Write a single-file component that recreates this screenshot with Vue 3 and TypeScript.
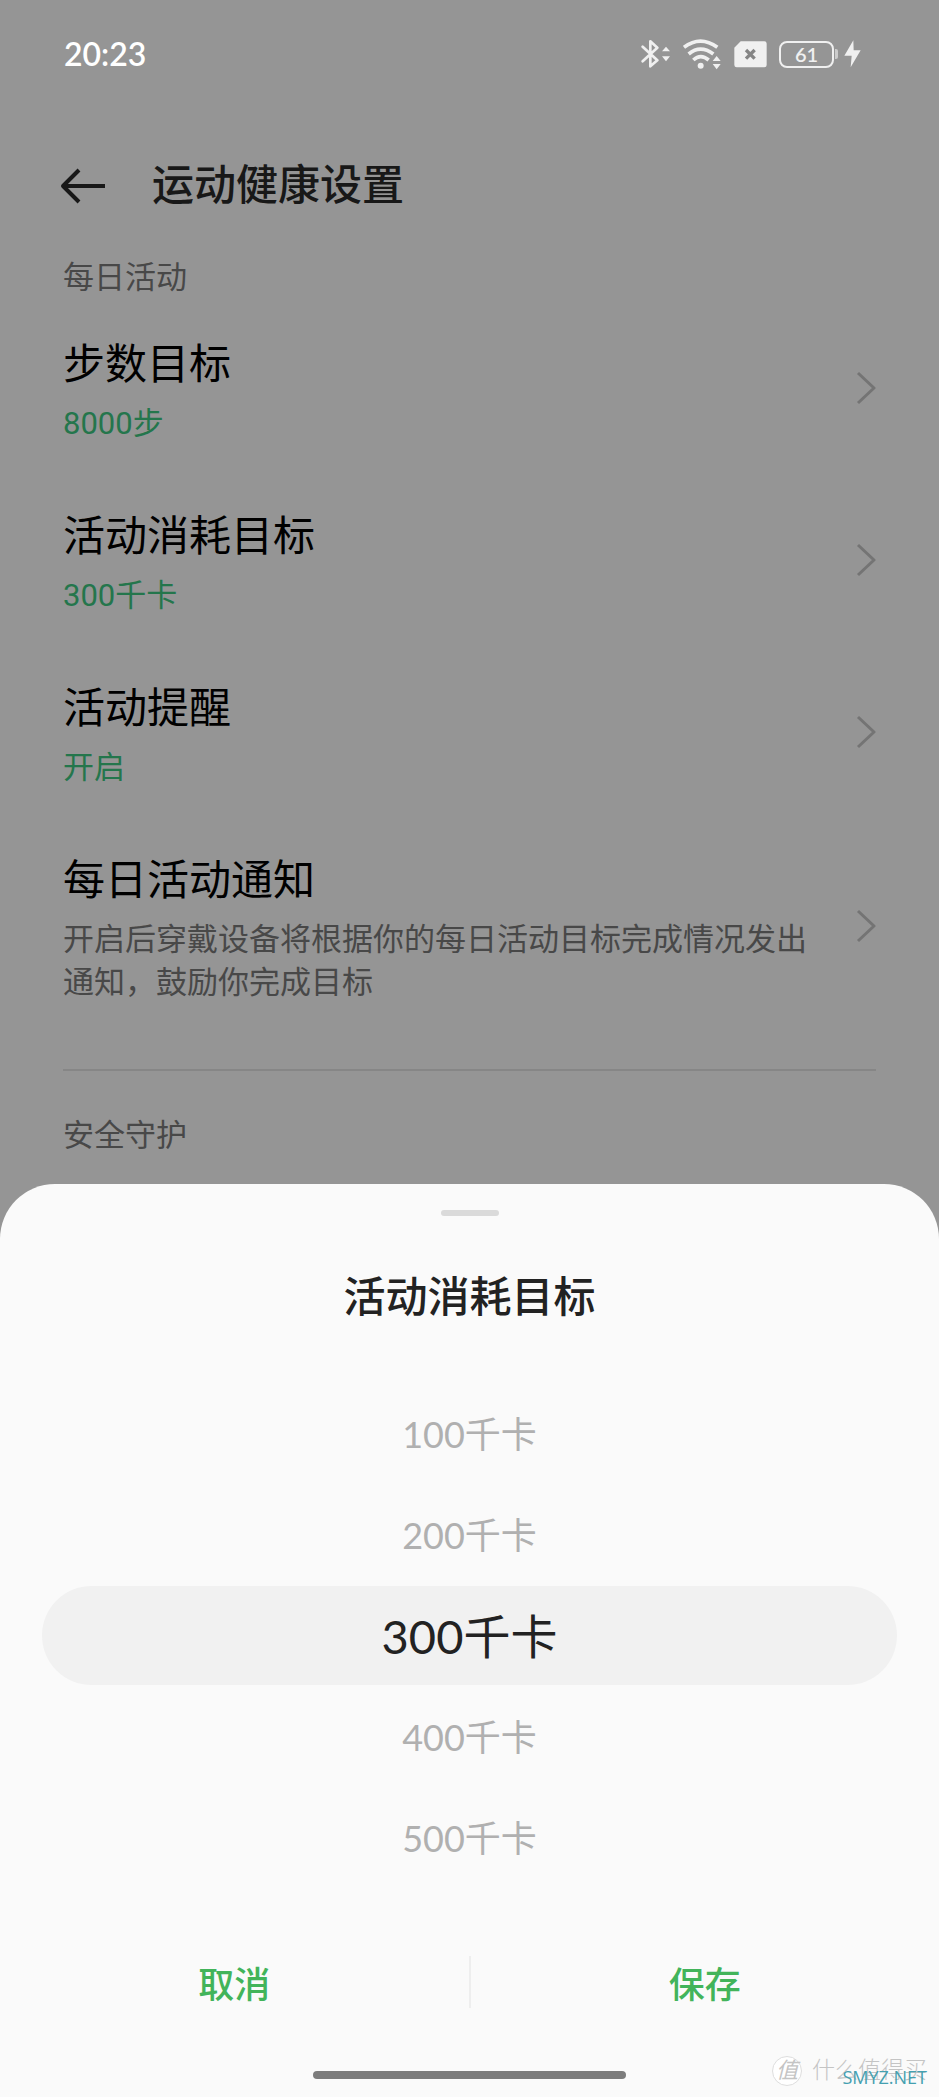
<script setup lang="ts">
import { ref } from 'vue'

interface SettingItem {
  title: string
  detail: string
  muted?: boolean
}

const items: SettingItem[] = [
  { title: '步数目标', detail: '8000步' },
  { title: '活动消耗目标', detail: '300千卡' },
  { title: '活动提醒', detail: '开启' },
  { title: '每日活动通知', detail: '开启后穿戴设备将根据你的每日活动目标完成情况发出通知，鼓励你完成目标', muted: true },
]

const goals: number[] = [100, 200, 300, 400, 500]
const selected = ref<number>(300)
</script>

<template>
  <div class="screen">
    <div class="status">
      <span class="time">20:23</span>
      <div class="status-icons">
        <svg width="30" height="30" viewBox="0 0 90 90" aria-hidden="true">
          <path d="M5 23 49 64 28 82V7L49 26 5 67" fill="none" stroke="currentColor" stroke-width="8" stroke-linejoin="round" stroke-linecap="round" />
          <path d="M75 23 87 37H63ZM75 67 63 52H87Z" fill="currentColor" />
        </svg>
        <svg width="39" height="31" viewBox="0 0 117 93" aria-hidden="true">
          <g fill="none" stroke="currentColor" stroke-width="11">
            <path d="M3 25Q52-12 103 25" />
            <path d="M17 45Q52 16 91 45" />
            <path d="M31 63Q53 43 77 63" />
          </g>
          <circle cx="53" cy="80" r="9" fill="currentColor" />
          <path d="M101 51 113 66H89ZM101 91 89 75H113Z" fill="currentColor" />
        </svg>
        <svg width="33" height="27" viewBox="0 0 99 81" aria-hidden="true">
          <path d="M20 1H91Q98 1 98 8V72Q98 79 91 79H8Q1 79 1 72V20Z" fill="currentColor" />
          <path d="M36 27 62 53M62 27 36 53" stroke="#858585" stroke-width="10" />
        </svg>
        <div class="battery">
          <span class="battery-body">61</span>
          <span class="battery-tip"></span>
          <svg width="17" height="28" viewBox="0 0 51 84" aria-hidden="true">
            <path d="M28 1 1 47H23L20 82 50 31H29Z" fill="currentColor" />
          </svg>
        </div>
      </div>
    </div>

    <header class="header">
      <button class="back" type="button" aria-label="返回">
        <svg width="46" height="36" viewBox="0 0 46 36" aria-hidden="true">
          <path d="M19 2 3 18 19 34M3 18H45" fill="none" stroke="currentColor" stroke-width="4" stroke-linejoin="round" />
        </svg>
      </button>
      <h1>运动健康设置</h1>
    </header>

    <main class="settings">
      <h2 class="section">每日活动</h2>
      <button v-for="item in items" :key="item.title" class="item" type="button">
        <span class="item-text">
          <span class="item-title">{{ item.title }}</span>
          <span class="item-detail" :class="{ muted: item.muted }">{{ item.detail }}</span>
        </span>
        <svg class="chevron" width="20" height="34" viewBox="0 0 20 34" aria-hidden="true">
          <path d="M2 2 18 17 2 32" fill="none" stroke="currentColor" stroke-width="3" stroke-linejoin="round" />
        </svg>
      </button>
      <hr />
      <h2 class="section">安全守护</h2>
    </main>

    <section class="sheet" role="dialog" aria-labelledby="sheet-title">
      <span class="handle"></span>
      <h2 id="sheet-title" class="sheet-title">活动消耗目标</h2>
      <div class="picker" role="radiogroup" aria-labelledby="sheet-title">
        <label v-for="goal in goals" :key="goal" class="option" :class="{ active: goal === selected }">
          <input v-model="selected" type="radio" name="goal" :value="goal" />
          <span>{{ goal }}千卡</span>
        </label>
      </div>
      <div class="actions">
        <button type="button">取消</button>
        <span class="divider"></span>
        <button type="button">保存</button>
      </div>
      <span class="home"></span>
    </section>

    <div class="watermark">
      <span class="seal">值</span>
      <span class="brand">什么值得买</span>
      <span class="site">SMYZ.NET</span>
    </div>
  </div>
</template>

<style>
body {
  margin: 0;
  background: #959595;
}
</style>

<style scoped>
.screen {
  position: relative;
  min-height: 100vh;
  overflow: hidden;
  background: #959595;
  font-family: Roboto, "Noto Sans CJK SC", sans-serif;
  color: #000;
}
h1,
h2 {
  margin: 0;
}
button {
  padding: 0;
  border: 0;
  background: none;
  font: inherit;
  color: inherit;
  cursor: pointer;
}
svg {
  display: block;
  flex: none;
}
.status {
  display: flex;
  align-items: center;
  justify-content: space-between;
  height: 108px;
  padding: 0 78px 0 64px;
  color: #f0f0f0;
}
.time {
  font: 600 32px/40px Lato, sans-serif;
  color: #fff;
}
.status-icons {
  display: flex;
  align-items: center;
  gap: 12px;
}
.battery {
  display: flex;
  align-items: center;
}
.battery-body {
  box-sizing: border-box;
  width: 55px;
  height: 27px;
  border: 2px solid #f0f0f0;
  border-radius: 8px;
  font: 600 20px/22px Lato, sans-serif;
  text-align: center;
}
.battery-tip {
  width: 3px;
  height: 10px;
  margin: 0 6px 0 1px;
  border-radius: 0 2px 2px 0;
  background: #ccc;
}
.header {
  box-sizing: border-box;
  display: flex;
  align-items: center;
  gap: 46px;
  height: 148px;
  padding: 8px 60px 0;
  color: #181818;
}
h1,
.sheet-title {
  font-size: 42px;
  line-height: 56px;
  font-weight: 500;
}
.settings {
  padding: 0 63px;
}
.section {
  font-size: 31px;
  line-height: 43px;
  font-weight: 400;
  color: #484848;
}
.item {
  display: flex;
  align-items: center;
  justify-content: space-between;
  gap: 45px;
  width: 100%;
  padding: 29px 0;
  text-align: left;
}
.section + .item {
  margin-top: 3px;
}
.item-text {
  display: flex;
  flex-direction: column;
  gap: 9px;
  padding-top: 6px;
}
.item-title {
  font-size: 42px;
  line-height: 56px;
}
.item-detail {
  font-size: 31px;
  line-height: 43px;
  color: #24764c;
}
.item-detail.muted {
  color: #484848;
}
.chevron {
  color: #747474;
}
hr {
  height: 2px;
  margin: 36px 0 43px;
  border: 0;
  background: #868686;
}
.sheet {
  position: absolute;
  left: 0;
  right: 0;
  bottom: 0;
  display: flex;
  flex-direction: column;
  align-items: center;
  box-sizing: border-box;
  padding: 26px 0 18px;
  border-radius: 55px 55px 0 0;
  background: #fafafa;
  color: #222;
}
.handle {
  width: 58px;
  height: 6px;
  border-radius: 3px;
  background: #dadada;
}
.sheet-title {
  margin: 54px 0 58px;
}
.picker {
  align-self: stretch;
  display: flex;
  flex-direction: column;
  gap: 2px;
  padding: 0 42px;
}
.option {
  box-sizing: border-box;
  display: flex;
  align-items: center;
  justify-content: center;
  height: 99px;
  padding-bottom: 4px;
  border-radius: 50px;
  font-family: Lato, "Noto Sans CJK SC", sans-serif;
  font-size: 36px;
  color: #b0b0b0;
  cursor: pointer;
}
.option.active {
  background: #f1f1f1;
  font-size: 47px;
  color: #222;
}
.option input {
  position: absolute;
  opacity: 0;
  pointer-events: none;
}
.actions {
  align-self: stretch;
  display: flex;
  align-items: center;
  margin: 43px 0 37px;
  color: #42b45a;
}
.actions button {
  flex: 1;
  height: 104px;
  font-size: 36px;
  font-weight: 500;
}
.divider {
  width: 2px;
  height: 52px;
  background: #eee;
}
.home {
  width: 33.3%;
  height: 8px;
  border-radius: 4px;
  background: #7c7c7c;
}
.watermark {
  position: absolute;
  right: 12px;
  bottom: 10px;
  display: flex;
  align-items: center;
  gap: 10px;
  color: #c4c4c4;
}
.seal {
  width: 28px;
  height: 28px;
  border: 1px solid #dedede;
  border-radius: 50%;
  background: #fff;
  font-size: 22px;
  line-height: 27px;
  text-align: center;
  font-style: italic;
}
.brand {
  font-size: 23px;
  line-height: 32px;
  font-weight: 300;
}
.site {
  position: absolute;
  right: 0;
  bottom: 0;
  font: 18px/20px "Open Sans", sans-serif;
  color: #45a0b0;
}
</style>
